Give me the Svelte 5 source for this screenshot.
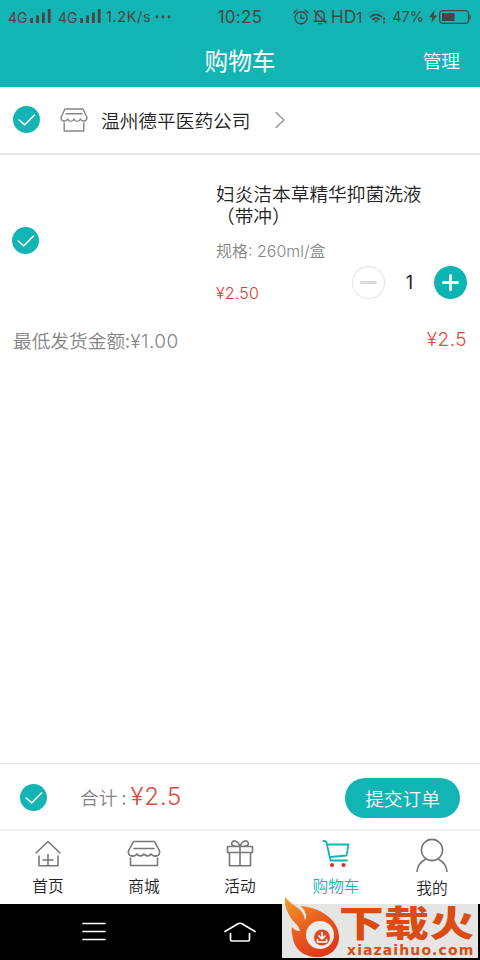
<script lang="ts">
  type Tab = { id: string; label: string };

  const tabs: Tab[] = [
    { id: "home", label: "首页" },
    { id: "mall", label: "商城" },
    { id: "gift", label: "活动" },
    { id: "cart", label: "购物车" },
    { id: "mine", label: "我的" },
  ];

  let active = $state("cart");
  let quantity = $state(1);
  let selected = $state({ shop: true, item: true, all: true });

  const price = 2.5;
  let total = $derived(quantity * price);
</script>

{#snippet check(key: "shop" | "item" | "all")}
  <button
    class="check"
    class:check--off={!selected[key]}
    aria-label="选择"
    onclick={() => (selected[key] = !selected[key])}
  >
    <svg viewBox="0 0 27 27" width="27" height="27">
      <path d="M6.2 14l5.6 4.8 9.7-9.8" />
    </svg>
  </button>
{/snippet}

{#snippet signal()}
  <svg class="signal" viewBox="0 0 21 15" width="21" height="15">
    <path d="M1.6 9v5M7.6 6.5V14M13.4 3.5V14M19.2 0v14" />
  </svg>
{/snippet}

<div class="screen">
  <header class="header">
    <div class="status">
      <div class="status__left">
        <span class="status__net">4G</span>
        {@render signal()}
        <span class="status__net status__net--second">4G</span>
        {@render signal()}
        <span class="status__speed">1.2K/s</span>
        <svg class="dots" viewBox="0 0 16 4" width="16" height="4">
          <circle cx="2" cy="2" r="1.4" />
          <circle cx="8" cy="2" r="1.4" />
          <circle cx="14" cy="2" r="1.4" />
        </svg>
      </div>
      <div class="status__time">10:25</div>
      <div class="status__right">
        <svg class="line" viewBox="0 0 16 16" width="16" height="16">
          <circle cx="8" cy="8.8" r="6" />
          <path d="M8 5.4v3.8h3M1 3.6L4 1M15 3.6L12 1" />
        </svg>
        <svg class="line bell" viewBox="0 0 14 16" width="14" height="16">
          <path d="M2.8 12V6.5C2.8 3.8 4.6 2 7 2s4.2 1.8 4.2 4.5V12M1 12.3h12M5.5 14.6h3M1 1.5l12 12.5" />
        </svg>
        <span class="status__hd">HD<small>1</small></span>
        <svg class="line wifi" viewBox="0 0 19 15" width="19" height="15">
          <path class="faint" d="M1 5.2C5.5 .7 12.5 .7 17 5.2" />
          <path class="thick" d="M3.5 7.7c3.2-3 7.8-3 11 0M6 10.3c1.8-1.6 4.2-1.6 6 0" />
          <path class="fill" d="M6.8 11.5h4.4L9 14z" />
          <path class="thick" d="M17 9.5v.6M17 13v.6" />
        </svg>
        <span class="status__percent">47%</span>
        <svg class="bolt" viewBox="0 0 8 13" width="8" height="13">
          <path d="M5.5 0L0 7.3h3.3L2.3 13 8 5.5H4.7z" />
        </svg>
        <svg class="battery" viewBox="0 0 33 14" width="33" height="14">
          <rect x=".6" y=".6" width="29" height="12.8" rx="3.5" />
          <path class="fill" d="M3 3h12.5v8H3zM30.5 4.5c1.8 .5 1.8 4.5 0 5z" />
        </svg>
      </div>
    </div>
    <div class="titlebar">
      <h1>购物车</h1>
      <button class="titlebar__manage">管理</button>
    </div>
  </header>

  <main>
    <div class="shop">
      {@render check("shop")}
      <svg class="shop__icon" viewBox="0 0 28 24" width="28" height="24">
        <path d="M5 1h18l4 8.5c0 4-5 4.8-6.6 1.5-1.2 3.2-5.2 3.2-6.4 0-1.2 3.2-5.2 3.2-6.4 0C6 14.3 1 13.5 1 9.5zM6 5.8h16M4.2 15v8h19.6v-8" />
      </svg>
      <span class="shop__name">温州德平医药公司</span>
      <svg class="shop__arrow" viewBox="0 0 10 16" width="10" height="16">
        <path d="M1 .5l8 7.5-8 7.5" />
      </svg>
    </div>

    <div class="product">
      {@render check("item")}
      <div class="product__info">
        <div class="product__name">妇炎洁本草精华抑菌洗液<br />（带冲）</div>
        <div class="product__spec">规格: 260ml/盒</div>
        <div class="product__row">
          <span class="product__price">¥{price.toFixed(2)}</span>
          <div class="stepper">
            <button
              class="stepper__btn stepper__btn--minus"
              aria-label="减少"
              onclick={() => (quantity = Math.max(1, quantity - 1))}
            >
              <svg viewBox="0 0 33 33" width="33" height="33"><path d="M9.5 16.5h14" /></svg>
            </button>
            <span class="stepper__value">{quantity}</span>
            <button class="stepper__btn stepper__btn--plus" aria-label="增加" onclick={() => quantity++}>
              <svg viewBox="0 0 33 33" width="33" height="33"><path d="M9.5 16.5h14M16.5 9.5v14" /></svg>
            </button>
          </div>
        </div>
      </div>
    </div>

    <div class="subtotal">
      <span>最低发货金额:<span class="latin">¥1.00</span></span>
      <span class="subtotal__sum">¥{total}</span>
    </div>
  </main>

  <div class="checkout">
    {@render check("all")}
    <span class="checkout__label">合计 :</span>
    <span class="checkout__sum">¥{total}</span>
    <button class="checkout__submit">提交订单</button>
  </div>

  <nav class="tabs">
    {#each tabs as tab (tab.id)}
      <button class="tab tab--{tab.id}" class:tab--active={active === tab.id} onclick={() => (active = tab.id)}>
        <svg viewBox="0 0 36 36" width="36" height="36">
          {#if tab.id === "home"}
            <path d="M6 17L18 5.5 30 17M9 20v9.8h19V20M18 18.5v11M13 24h10" />
          {:else if tab.id === "mall"}
            <path d="M7.5 5.5h21L33.500 15c1.2 5.500-6 6.500-8.500 3-1.500 2.500-5.500 2.500-7 0-1.500 2.500-5.500 2.500-7 0-2.500 3.500-9.700 2.500-8.500-3zM8 12.500h20M4.500 22v7.500h27V22" />
          {:else if tab.id === "gift"}
            <path d="M5.500 10.500h25v6h-25zM7.500 16.500h21v13.300h-21zM18 10.500v19.300M18 10.500c-6 0-9.500-1-8-4s6-2 8 4c2-6 6.500-7 8-4s-2 4-8 4" />
          {:else if tab.id === "cart"}
            <path d="M5.500 5c3 0 3 .500 3.500 3.500L12.500 24.500h16.500M9.500 8.500h21L28.500 19.500 12.500 21" />
            <circle cx="14" cy="29" r="2" />
            <circle cx="25.500" cy="29" r="2" />
          {:else}
            <circle cx="18" cy="14" r="10.600" />
            <path d="M12 23c-5 2.500-8.500 7-9 12.500M24 23c5 2.500 8.500 7 9 12.500" />
          {/if}
        </svg>
        <span>{tab.label}</span>
      </button>
    {/each}
  </nav>

  <footer class="navbar">
    <svg viewBox="0 0 24 20" width="24" height="20">
      <path d="M1 1.5h22M1 9.5h22M1 17.5h22" />
    </svg>
    <svg viewBox="0 0 32 20" width="32" height="20">
      <path d="M1 9.500L13.500 2q2.500-1.500 5 0L31 9.500M6.500 11.500v6q0 1.500 1.500 1.500h16q1.500 0 1.500-1.500v-6" />
    </svg>
  </footer>

  <aside class="brand">
    <svg class="brand__flame" viewBox="0 0 62 64" width="62" height="64">
      <defs>
        <linearGradient id="flame" x1="0" y1="0" x2=".6" y2="1">
          <stop offset="0" stop-color="#f3a029" />
          <stop offset=".5" stop-color="#e96220" />
          <stop offset="1" stop-color="#de3918" />
        </linearGradient>
      </defs>
      <path
        fill="url(#flame)"
        d="M2 0c5 6 9 8 14 12 4 3 5 7 6 11 3-3 0-11-5-14 19 1 39 13 39 31 0 12-9 20-22 20C20 60 12 52 10 42c-1-5-2-8-1-12 3 4 6 4 8 4-1-6-6-8-9-13C4 15 1 8 2 0z"
      />
      <circle cx="37" cy="38" r="14" fill="#ececea" />
      <circle cx="39" cy="40.500" r="8" fill="#dd4925" />
      <path class="brand__arrow" d="M39 35.500v6M36 39l3 3 3-3M34.500 42.500v2.500h9v-2.500" />
    </svg>
    <div class="brand__text">
      <div class="brand__name">下载火</div>
      <div class="brand__url">xiazaihuo.com</div>
    </div>
  </aside>
</div>

<style>
  :global(body) {
    background: #fff;
  }

  .screen {
    --teal: #12b5b3;
    --red: #dd4a40;
    position: relative;
    display: flex;
    flex-direction: column;
    width: 480px;
    height: 960px;
    overflow: hidden;
    background: #fff;
    color: #222;
    font-family: "Noto Sans CJK SC", sans-serif;
    font-size: 18.7px;
    font-weight: 350;
  }

  button {
    padding: 0;
    border: 0;
    background: none;
    color: inherit;
    font: inherit;
  }

  svg {
    display: block;
    flex: none;
    fill: none;
    stroke-linecap: round;
    stroke-linejoin: round;
  }

  .header {
    height: 87px;
    flex: none;
    background: var(--teal);
  }

  .status {
    display: grid;
    grid-template-columns: 1fr auto 1fr;
    align-items: center;
    height: 33px;
    padding: 0 8px;
    color: #4a4542;
    font-family: Inter, sans-serif;
    font-size: 14.5px;
    font-weight: 400;
  }

  .status__left,
  .status__right {
    display: flex;
    align-items: center;
  }

  .status__right {
    justify-content: flex-end;
  }

  .status__net {
    width: 20px;
    margin-right: 2px;
    font-size: 14px;
    padding-top: 2px;
  }

  .status__net--second {
    margin-left: 7px;
  }

  .signal {
    margin-top: -1px;
    stroke: #4a4542;
    stroke-width: 2.8;
    stroke-linecap: butt;
  }

  .status__speed {
    margin-left: 5px;
    letter-spacing: 0.6px;
  }

  .dots {
    margin-left: 4px;
    fill: #4a4542;
  }

  .status__time {
    font-size: 17px;
    letter-spacing: 0.3px;
  }

  .line,
  .battery {
    stroke: #4a4542;
    stroke-width: 1.4;
  }

  .thick {
    stroke-width: 1.9;
  }

  .fill,
  .bolt {
    fill: #4a4542;
    stroke: none;
  }

  .faint {
    opacity: 0.3;
  }

  .bell {
    margin-left: 4px;
  }

  .status__hd {
    margin-left: 4px;
    font-size: 17.5px;
  }

  .status__hd small {
    font-size: 14px;
  }

  .wifi {
    margin-left: 5px;
  }

  .status__percent {
    margin-left: 6px;
  }

  .bolt {
    margin-left: 5px;
  }

  .battery {
    margin-left: 2px;
  }

  .titlebar {
    display: grid;
    grid-template-columns: 1fr auto 1fr;
    align-items: center;
    height: 54px;
    padding-right: 20px;
    color: #fff;
  }

  .titlebar h1 {
    grid-column: 2;
    margin: 0 -20px 0 0;
    font-size: 23.7px;
    font-weight: 400;
  }

  .titlebar__manage {
    justify-self: end;
    margin-top: -1px;
  }

  main {
    flex: 1;
  }

  .check {
    width: 27px;
    height: 27px;
    flex: none;
    border-radius: 50%;
    background: var(--teal);
  }

  .check--off {
    background: #ccc;
  }

  .check svg {
    stroke: #fff;
    stroke-width: 1.6;
  }

  .shop {
    display: flex;
    align-items: center;
    box-sizing: border-box;
    height: 68px;
    padding: 0 0 1px 13px;
    border-bottom: 2px solid #e5e5e5;
  }

  .shop__icon {
    margin-left: 20px;
    stroke: #858585;
    stroke-width: 1.4;
  }

  .shop__name {
    margin-left: 13px;
  }

  .shop__arrow {
    margin-left: 24px;
    stroke: #8f8f8f;
    stroke-width: 1.2;
  }

  .product {
    display: flex;
    align-items: center;
    height: 148px;
    padding: 11px 13px 0 12px;
  }

  .product__info {
    flex: 1;
    margin-left: 177px;
    height: 116px;
  }

  .product__name {
    line-height: 21.5px;
  }

  .product__spec {
    margin-top: 14px;
    color: #858585;
    font-family: Inter, "Noto Sans CJK SC", sans-serif;
    font-size: 16px;
    line-height: 24px;
  }

  .product__row {
    display: flex;
    justify-content: space-between;
    margin-top: 3px;
  }

  .product__price {
    margin-top: 15px;
    color: #dc3b30;
    font-family: Inter, sans-serif;
    font-size: 16px;
    letter-spacing: 0.2px;
    line-height: 24px;
  }

  .stepper {
    display: flex;
    align-items: center;
    height: 33px;
  }

  .stepper__btn {
    box-sizing: border-box;
    width: 33px;
    height: 33px;
    border-radius: 50%;
  }

  .stepper__btn--minus {
    background: #fff;
    box-shadow: inset 0 0 0 1px #e2e2e2;
    stroke: #dadada;
    stroke-width: 3;
  }

  .stepper__btn--plus {
    background: #0cb5b1;
    stroke: #fff;
    stroke-width: 3;
  }

  .stepper__value {
    width: 49px;
    font-family: Inter, sans-serif;
    font-size: 18px;
    font-weight: 400;
    text-align: center;
  }

  .subtotal {
    display: flex;
    justify-content: space-between;
    align-items: center;
    height: 28px;
    margin-top: 11px;
    padding: 0 13px;
    color: #858585;
  }

  .latin,
  .subtotal__sum {
    font-family: Inter, sans-serif;
    font-size: 19px;
    letter-spacing: 0.5px;
  }

  .subtotal__sum {
    margin-top: 1px;
    color: var(--red);
  }

  .checkout {
    display: flex;
    align-items: center;
    box-sizing: border-box;
    height: 66px;
    padding: 2px 20px 0;
    border-top: 1px solid #e2e2e2;
  }

  .checkout__label {
    margin: -2px 0 0 33px;
    color: #858585;
  }

  .checkout__sum {
    margin: -3px 0 0 4px;
    color: var(--red);
    font-family: Inter, sans-serif;
    font-size: 24px;
    letter-spacing: 0.8px;
  }

  .checkout__submit {
    width: 115px;
    height: 40px;
    margin-left: auto;
    padding-bottom: 1px;
    border-radius: 20px;
    background: var(--teal);
    color: #fff;
  }

  .tabs {
    display: flex;
    box-sizing: border-box;
    height: 75px;
    border-top: 2px solid #f0f0f0;
  }

  .tab {
    display: flex;
    flex: 1;
    flex-direction: column;
    align-items: center;
    padding-top: 5px;
    font-size: 15.7px;
    line-height: 24px;
  }

  .tab svg {
    margin-bottom: 2px;
    stroke: #777;
    stroke-width: 1.6;
  }

  .tab--active {
    color: var(--teal);
  }

  .tab--cart svg {
    stroke: var(--teal);
    stroke-width: 1.8;
  }

  .tab--cart circle {
    fill: #e3241b;
    stroke: none;
  }

  .tab--mine svg {
    margin-bottom: 4px;
  }

  .navbar {
    display: flex;
    align-items: center;
    gap: 118px;
    height: 56px;
    padding-left: 82px;
    background: #000;
  }

  .navbar svg {
    stroke: #fff;
    stroke-width: 1.7;
  }

  .brand {
    position: absolute;
    right: 2px;
    bottom: 2px;
    width: 196px;
    height: 54px;
    background: #e5e5e4;
    color: #db4b12;
  }

  .brand__flame {
    position: absolute;
    top: -7px;
    left: 1px;
  }

  .brand__arrow {
    stroke: #fff;
    stroke-width: 1.7;
  }

  .brand__text {
    margin-left: 57px;
  }

  .brand__name {
    width: 111px;
    height: 39px;
    font-size: 36px;
    font-weight: 900;
    line-height: 35px;
    letter-spacing: 0.5px;
    white-space: nowrap;
    transform: scaleX(1.24);
    transform-origin: 0 0;
  }

  .brand__url {
    padding-left: 8px;
    font-family: "DejaVu Sans", sans-serif;
    font-size: 14px;
    font-weight: 700;
    letter-spacing: 1.1px;
    line-height: 14px;
  }
</style>
